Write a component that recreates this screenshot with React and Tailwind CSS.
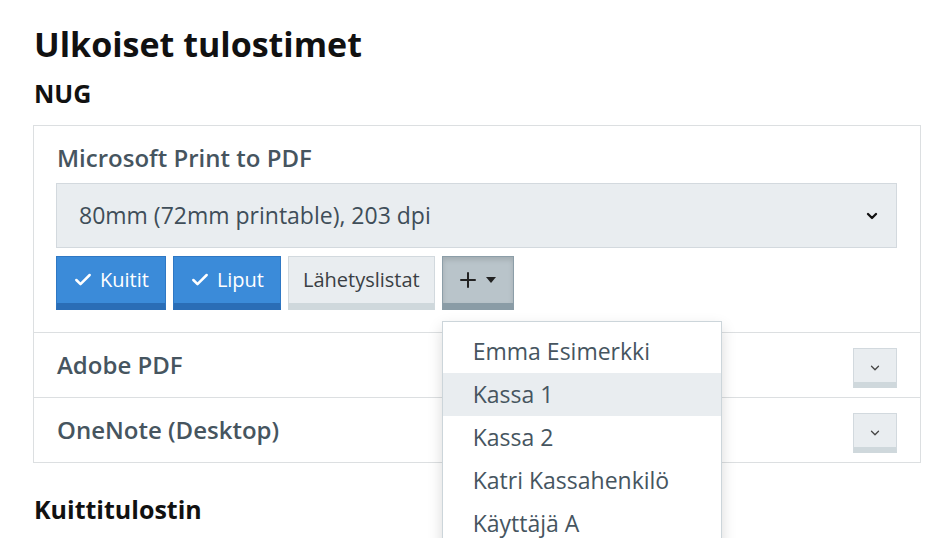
import { Check, ChevronDown, Plus } from 'lucide-react'

const USERS = ['Emma Esimerkki', 'Kassa 1', 'Kassa 2', 'Katri Kassahenkilö', 'Käyttäjä A']

function ToggleButton({ active, children }) {
  if (active) {
    return (
      <button className="h-[54px] px-[16px] flex items-center gap-[7px] bg-[#3b8bd9] border border-[#2f78c4] border-b-[7px] border-b-[#2a6db6] text-white text-[20px]">
        <Check size={20} strokeWidth={3} />
        {children}
      </button>
    )
  }
  return (
    <button className="h-[54px] px-[14px] flex items-center bg-[#e9edf0] border border-[#d2d9de] border-b-[7px] border-b-[#cfd8dc] text-[#3a3f44] text-[20px]">
      {children}
    </button>
  )
}

function PrinterRow({ name }) {
  return (
    <div className="h-[65px] border-t border-[#dcdfe1] flex items-center justify-between pl-[23px] pr-[23px]">
      <span className="text-[24px] font-semibold text-[#46555f] leading-[28px]">{name}</span>
      <button className="w-[44px] h-[40px] mt-[6px] flex items-center justify-center bg-[#e9edf0] border border-[#d2d9de] border-b-[6px] border-b-[#cfd8dc] pt-[4px]">
        <ChevronDown size={14} strokeWidth={2.2} className="text-[#444]" />
      </button>
    </div>
  )
}

export default function App() {
  return (
    <div className="min-h-screen bg-white pl-[33px] pt-[22px] overflow-hidden" style={{ fontFamily: '"Open Sans", "Noto Sans", sans-serif' }}>
      <h1 className="text-[34px] font-bold text-[#111] leading-[44px] pl-[1px]">Ulkoiset tulostimet</h1>
      <h3 className="text-[25px] font-bold text-[#111] leading-[32px] mt-[11px] pl-[1px]">NUG</h3>

      <div className="w-[888px] mt-[16px] border border-[#dcdfe1] relative">
        <div className="pl-[22px] pr-[23px] pt-[18px] pb-[22px]">
          <div className="text-[24px] font-semibold text-[#46555f] leading-[28px] pl-[1px]">Microsoft Print to PDF</div>
          <div className="mt-[11px] h-[65px] bg-[#e9edf0] border border-[#d3d9de] flex items-center justify-between pl-[22px] pr-[16px]">
            <span className="text-[23px] text-[#3f4e59]">80mm (72mm printable), 203 dpi</span>
            <ChevronDown size={16} strokeWidth={3.5} className="text-[#111]" />
          </div>
          <div className="mt-[8px] flex gap-[7px]">
            <ToggleButton active>Kuitit</ToggleButton>
            <ToggleButton active>Liput</ToggleButton>
            <ToggleButton>Lähetyslistat</ToggleButton>
            <div className="relative">
              <button className="h-[54px] w-[72px] flex items-center justify-center gap-[6px] pr-[4px] bg-[#b9c4ca] border border-[#8c9ea8] border-b-[7px] border-b-[#8a9ca6] shadow-[inset_0_3px_5px_rgba(0,0,0,0.12)] text-[#222]">
                <Plus size={24} strokeWidth={2} />
                <svg width="10" height="6" viewBox="0 0 10 6"><path d="M0 0h10L5 6z" fill="#222" /></svg>
              </button>
              <div className="absolute left-0 top-[65px] w-[280px] bg-white border border-[#ccd5da] shadow-[0_6px_14px_rgba(0,0,0,0.15)] py-[8px] z-10">
                {USERS.map((u) => (
                  <div
                    key={u}
                    className={
                      'h-[43px] flex items-center pl-[30px] text-[23px] text-[#46555f] ' +
                      (u === 'Kassa 1' ? 'bg-[#e9edf0]' : '')
                    }
                  >
                    {u}
                  </div>
                ))}
              </div>
            </div>
          </div>
        </div>
        <PrinterRow name="Adobe PDF" />
        <PrinterRow name="OneNote (Desktop)" />
      </div>

      <h3 className="text-[25px] font-bold text-[#111] leading-[32px] mt-[30px] pl-[1px]">Kuittitulostin</h3>
    </div>
  )
}
